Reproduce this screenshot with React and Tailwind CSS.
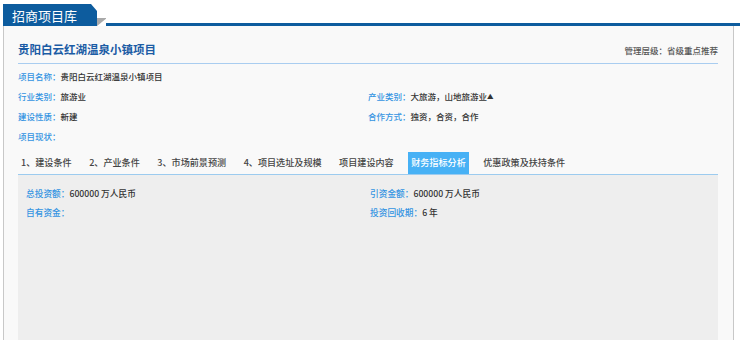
import React from "react";

const font = { fontFamily: '"Noto Sans CJK SC", "Noto Sans", sans-serif' };

function Field({ label, value }) {
  return (
    <div className="flex items-center h-[20px] text-[8.5px] font-medium whitespace-nowrap">
      <span className="text-[#3494e2]">{label}：</span>
      <span className="text-[#333]">{value}</span>
    </div>
  );
}

function Field2({ label, value }) {
  return (
    <div className="flex items-center h-[19px] text-[8.7px] font-medium whitespace-nowrap">
      <span className="text-[#3494e2]">{label}：</span>
      <span className="text-[#333]">{value}</span>
    </div>
  );
}

const tabs = [
  "1、建设条件",
  "2、产业条件",
  "3、市场前景预测",
  "4、项目选址及规模",
  "项目建设内容",
  "财务指标分析",
  "优惠政策及扶持条件",
];

export default function App() {
  return (
    <div
      className="w-[740px] h-[340px] bg-white overflow-hidden flex flex-col"
      style={font}
    >
      {/* header */}
      <div className="relative h-[26px] shrink-0 flex items-end">
        <div className="ml-[3px] w-[94px] h-[22px] bg-[#0d5c9e] [clip-path:polygon(0_0,88px_0,94px_7px,94px_100%,0_100%)] flex items-center pl-[9px] text-white text-[13px] leading-none">
          招商项目库
        </div>
        <svg width="10" height="8" viewBox="0 0 10 8" className="self-end">
          <polygon points="0,0 10,0 0,8" fill="#a9a9a9" />
        </svg>
        <div className="w-[637px] h-[3px] bg-[#0d5c9e]" />
      </div>

      {/* panel */}
      <div className="ml-[3px] w-[731px] flex-1 border-l border-r border-[#c8c8c8] bg-[#f9f9f9] pl-[14px] pr-[15px] pt-[13px] flex flex-col">
        <div className="h-[22px] flex items-center justify-between">
          <div className="text-[11.5px] font-bold text-[#1b5ca5] leading-none">
            贵阳白云红湖温泉小镇项目
          </div>
          <div className="text-[8.5px] font-medium text-[#555]">管理层级：省级重点推荐</div>
        </div>
        <div className="mt-[2px] h-px bg-[#a9cdf0]" />

        <div className="mt-[2px] grid grid-cols-[350px_1fr]">
          <div className="col-span-2">
            <Field label="项目名称" value="贵阳白云红湖温泉小镇项目" />
          </div>
          <Field label="行业类别" value="旅游业" />
          <Field
            label="产业类别"
            value={
              <>
                大旅游，山地旅游业<span className="text-[6.5px] align-[1px]">▲</span>
              </>
            }
          />
          <Field label="建设性质" value="新建" />
          <Field label="合作方式" value="独资，合资，合作" />
          <div className="col-span-2">
            <Field label="项目现状" value="" />
          </div>
        </div>

        {/* tabs */}
        <div className="mt-[6px] h-[23px] flex items-stretch gap-[11.5px] border-b border-[#9ccbef] text-[9.1px] font-medium whitespace-nowrap">
          {tabs.map((t, i) => (
            <div
              key={t}
              className={
                i === 5
                  ? "flex items-center px-[3px] bg-[#47b1f5] text-white"
                  : "flex items-center px-[3px] text-[#444]"
              }
            >
              {t}
            </div>
          ))}
        </div>

        {/* content */}
        <div className="flex-1 bg-[#eeeeee] pl-[8px] pt-[9px] grid grid-cols-[344px_1fr] content-start">
          <Field2 label="总投资额" value="600000 万人民币" />
          <Field2 label="引资金额" value="600000 万人民币" />
          <Field2 label="自有资金" value="" />
          <Field2 label="投资回收期" value="6 年" />
        </div>
      </div>
    </div>
  );
}
